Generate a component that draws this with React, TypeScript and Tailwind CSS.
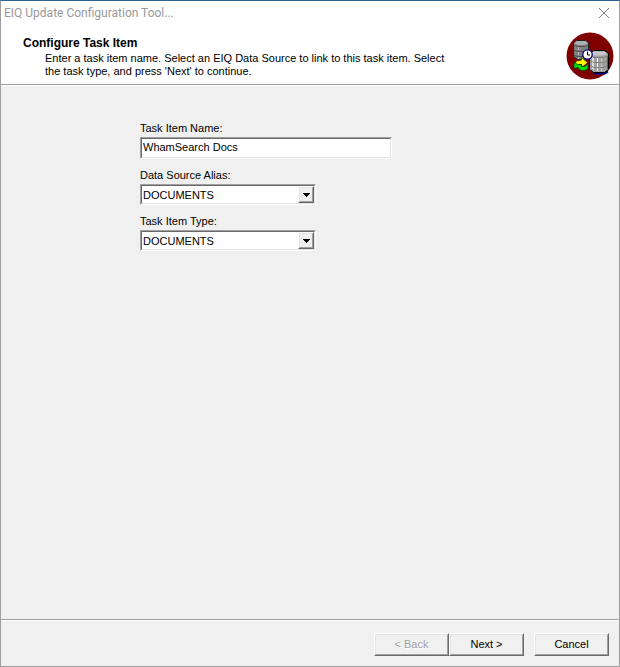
import React from 'react'

const sunken = 'border border-t-[#a0a0a0] border-l-[#a0a0a0] border-b-white border-r-white'
const sunkenInner = 'border border-t-[#696969] border-l-[#696969] border-b-[#e3e3e3] border-r-[#e3e3e3] bg-white'
const raised = 'border border-t-white border-l-white border-b-[#696969] border-r-[#696969]'
const raisedInner = 'border border-t-[#e3e3e3] border-l-[#e3e3e3] border-b-[#a0a0a0] border-r-[#a0a0a0]'

function TaskIcon() {
    return (
        <svg width="48" height="48" viewBox="0 0 48 48" aria-hidden="true">
            <circle cx="24" cy="24" r="23.5" fill="#800000" />
            {/* back cylinder */}
            <path d="M7.5 11.5l3-3h9l3 2v14l-3 3h-8l-4-3z" fill="#808080" stroke="#202020" />
            <path d="M8 11l3-2h8l3 2-3 2h-7z" fill="#b0b0b0" />
            <path d="M8 13.5l4 1h7l3-1M8 18.5l4 1h7M8 23.5l4 1h6" fill="none" stroke="#505050" />
            <path d="M12.5 15v3M12.5 20v3M12.5 25v2" stroke="#c0c0c0" />
            {/* front cylinder */}
            <path d="M27 41.5h12l3-2" fill="none" stroke="#000080" strokeWidth="2" />
            <path d="M23.5 21.5l4-3h11l4 3v16l-4 3h-11l-4-3z" fill="#a0a0a0" stroke="#000" />
            <path d="M25 21.5l3-2h10l3 2-3 2H28z" fill="#c8c8c8" />
            <path d="M26.5 25v12M27.5 26v12" stroke="#dcdcdc" />
            <path d="M31.5 26v13" stroke="#fff" />
            <path d="M35.5 26v13" stroke="#c8c8c8" />
            <path d="M24 23.5l4 2h10l4-2M24 28.5l4 2h10l4-2M24 33.5l4 2h10l4-2" fill="none" stroke="#808080" />
            <path d="M41.5 24v13" stroke="#606060" />
            {/* refresh arrows */}
            <path d="M8.5 32l2-3 5-1v-2.5l6 5-5 4.5v-3h-4l-3 3z" fill="#ffff00" stroke="#303000" strokeWidth="0.7" />
            <path d="M8 30.5v6l4-1c2 4 7 4 10 1v-5l-3 3h-4l1-1.5-5-1z" fill="#00e000" stroke="#003000" strokeWidth="0.7" />
            <path d="M12 31h5v-3l3 2.5-4 3.5v-2h-4z" fill="#ffff00" />
            {/* clock */}
            <circle cx="21.5" cy="22.5" r="4.7" fill="#fff" stroke="#000080" strokeWidth="1.3" />
            <path d="M21.5 19.5v3.5h2.5" fill="none" stroke="#000" />
        </svg>
    )
}

function TextField({ id, label, value }: { id: string; label: string; value: string }) {
    return (
        <div>
            <label htmlFor={id} className="block h-4 leading-4">{label}</label>
            <div className={`mt-px max-w-[252px] ${sunken}`}>
                <input
                    id={id}
                    type="text"
                    defaultValue={value}
                    className={`block h-5 w-full px-px pb-0.5 outline-none ${sunkenInner}`}
                />
            </div>
        </div>
    )
}

function SelectField({ id, label, value }: { id: string; label: string; value: string }) {
    return (
        <div>
            <label htmlFor={id} className="block h-4 leading-4">{label}</label>
            <div className={`mt-px w-44 ${sunken}`}>
                <div className={`relative ${sunkenInner}`}>
                    <select
                        id={id}
                        defaultValue={value}
                        className="block h-[17px] w-full appearance-none bg-transparent px-px leading-4 outline-none"
                    >
                        <option>{value}</option>
                    </select>
                    <span className={`pointer-events-none absolute inset-y-0 right-0 w-4 bg-[#f0f0f0] ${raised}`}>
                        <span className={`flex h-full items-center justify-center ${raisedInner}`}>
                            <svg width="7" height="4" viewBox="0 0 7 4" shapeRendering="crispEdges" aria-hidden="true">
                                <path d="M0 0h7v1H6v1H5v1H4v1H3V3H2V2H1V1H0z" />
                            </svg>
                        </span>
                    </span>
                </div>
            </div>
        </div>
    )
}

function WizardButton({ children, disabled }: { children: React.ReactNode; disabled?: boolean }) {
    return (
        <button type="button" disabled={disabled} className={`h-[23px] w-[75px] ${raised}`}>
            <span
                className={`flex h-full items-center justify-center ${raisedInner} ${
                    disabled ? 'text-[#a0a0a0] [text-shadow:1px_1px_0_#fff]' : ''
                }`}
            >
                {children}
            </span>
        </button>
    )
}

export default function App() {
    return (
        <div className="flex min-h-screen flex-col border border-t-[#2d628f] border-r-[#a0a0a0] border-b-[#a0a0a0] border-l-[#a0a0a0] bg-[#f0f0f0] font-['Liberation_Sans',Arial,sans-serif] text-[11px] text-black">
            <header className="border-b border-[#a0a0a0] bg-white">
                <div className="flex h-6 items-center justify-between pr-[9px] pl-[3px]">
                    <h1 className="font-[Roboto,'Segoe_UI',sans-serif] text-xs text-[#999999]">EIQ Update Configuration Tool...</h1>
                    <button type="button" aria-label="Close" className="text-[#808080]">
                        <svg width="12" height="12" viewBox="0 0 12 12" aria-hidden="true">
                            <path d="M1 1l10 10M11 1L1 11" fill="none" stroke="currentColor" />
                        </svg>
                    </button>
                </div>
                <div className="flex justify-between pr-[5px] pb-1 pl-[22px]">
                    <div className="pt-3">
                        <h2 className="text-xs leading-3 font-bold">Configure Task Item</h2>
                        <p className="mt-[3px] max-w-[430px] pl-[22px] leading-[13px]">
                            Enter a task item name. Select an EIQ Data Source to link to this task item. Select the task type, and press 'Next' to continue.
                        </p>
                    </div>
                    <div className="pt-[7px]">
                        <TaskIcon />
                    </div>
                </div>
            </header>
            <main className="flex grow flex-col gap-2 border-t border-white pt-[34px] pr-4 pl-[139px]">
                <TextField id="item-name" label="Task Item Name:" value="WhamSearch Docs" />
                <SelectField id="source-alias" label="Data Source Alias:" value="DOCUMENTS" />
                <SelectField id="item-type" label="Task Item Type:" value="DOCUMENTS" />
            </main>
            <footer className="border-t border-[#a0a0a0]">
                <div className="flex justify-end gap-[10px] border-t border-white pt-3 pr-[10px] pb-[10px]">
                    <div className="flex">
                        <WizardButton disabled>&lt; Back</WizardButton>
                        <WizardButton>Next &gt;</WizardButton>
                    </div>
                    <WizardButton>Cancel</WizardButton>
                </div>
            </footer>
        </div>
    )
}
